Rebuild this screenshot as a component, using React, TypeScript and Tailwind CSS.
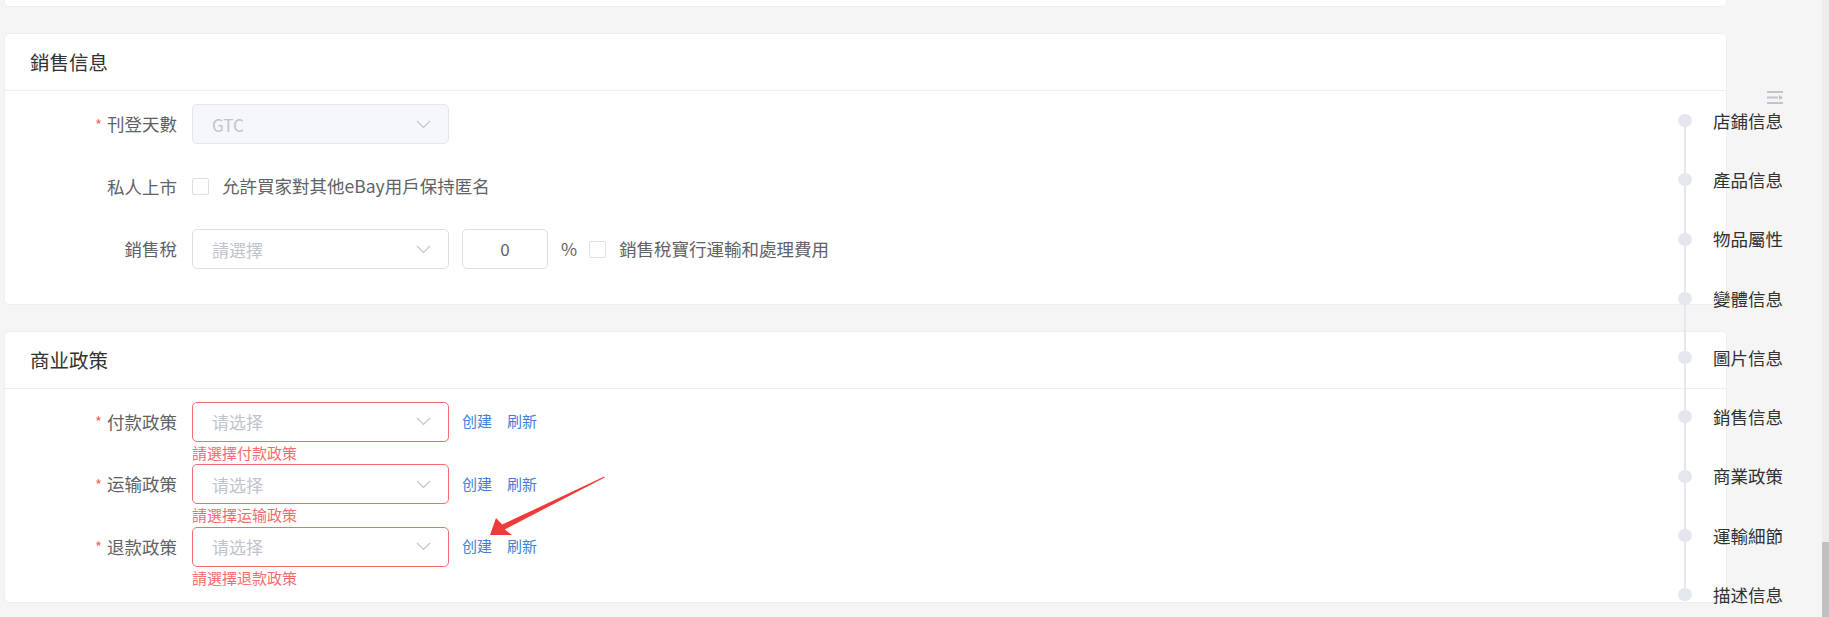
import React from 'react';

const font = { fontFamily: '"Noto Sans CJK SC", "Noto Sans CJK TC", "Liberation Sans", sans-serif' };

function Chevron() {
  return (
    <svg width="15" height="9" viewBox="0 0 15 9" fill="none">
      <path d="M1 1l6.5 6.5L14 1" stroke="#c0c4cc" strokeWidth="1.2" />
    </svg>
  );
}

function Select({
  value,
  placeholder,
  disabled,
  error,
}: {
  value?: string;
  placeholder?: string;
  disabled?: boolean;
  error?: boolean;
}) {
  return (
    <div
      className={
        'w-[257px] h-[40px] rounded-[5px] border px-[19px] pr-[17px] flex items-center justify-between text-[17px] ' +
        (disabled
          ? 'bg-[#f5f7fa] border-[#e4e7ed]'
          : error
            ? 'bg-white border-[#f56c6c]'
            : 'bg-white border-[#dcdfe6]')
      }
    >
      <span className="text-[#c0c4cc] leading-none">{value ?? placeholder}</span>
      <Chevron />
    </div>
  );
}

function Checkbox() {
  return <span className="w-[17px] h-[17px] border border-[#dcdfe6] rounded-[2px] bg-white shrink-0" />;
}

function Label({ text, required }: { text: string; required?: boolean }) {
  return (
    <div className="w-[187px] shrink-0 pr-[15px] flex justify-end items-center text-[17.5px] text-[#606266] leading-none">
      {required && <span className="text-[#f56c6c] mr-[5px] text-[15px]">*</span>}
      {text}
    </div>
  );
}

function Card({ title, children }: { title: string; children: React.ReactNode }) {
  return (
    <div className="bg-white border border-[#ebeef5] rounded-[5px]">
      <div className="h-[57px] px-[25px] flex items-center border-b border-[#ebeef5] text-[19.5px] text-[#303133]">
        {title}
      </div>
      <div className="pt-[13px] pb-[12px]">{children}</div>
    </div>
  );
}

function PolicyRow({ label, error }: { label: string; error: string }) {
  return (
    <div className="flex h-[40px] mb-[22.5px] last:mb-[0px]">
      <Label text={label} required />
      <div className="relative">
        <Select placeholder="请选择" error />
        <div className="absolute left-0 top-full mt-[3px] text-[15px] leading-[15px] text-[#f56c6c] whitespace-nowrap">
          {error}
        </div>
      </div>
      <div className="flex items-center gap-[15px] ml-[13px] text-[15px] text-[#3f82d9]">
        <span>创建</span>
        <span>刷新</span>
      </div>
    </div>
  );
}

const navItems = ['店鋪信息', '產品信息', '物品屬性', '變體信息', '圖片信息', '銷售信息', '商業政策', '運輸細節', '描述信息'];

export default function App() {
  return (
    <div className="relative h-[617px] w-[1829px] overflow-hidden bg-[#f5f5f5]" style={font}>
      <div className="pl-[4px] w-[1727px]">
        {/* previous card bottom */}
        <div className="h-[7px] bg-white border border-t-0 border-[#ebeef5] rounded-b-[5px]" />

        <div className="mt-[26px]">
          <Card title="銷售信息">
            <div className="flex h-[40px] mb-[22.5px]">
              <Label text="刊登天數" required />
              <Select value="GTC" disabled />
            </div>
            <div className="flex h-[40px] mb-[22.5px]">
              <Label text="私人上市" />
              <div className="flex items-center gap-[13px]">
                <Checkbox />
                <span className="text-[17.5px] text-[#606266]">允許買家對其他eBay用戶保持匿名</span>
              </div>
            </div>
            <div className="flex h-[40px] mb-[22.5px]">
              <Label text="銷售稅" />
              <Select placeholder="請選擇" />
              <div className="ml-[13px] w-[86px] h-[40px] rounded-[5px] border border-[#dcdfe6] flex items-center justify-center text-[17px] text-[#606266]">
                0
              </div>
              <span className="ml-[13px] flex items-center text-[17.5px] text-[#606266]">%</span>
              <div className="ml-[12px] flex items-center gap-[13px]">
                <Checkbox />
                <span className="text-[17.5px] text-[#606266]">銷售稅寶行運輸和處理費用</span>
              </div>
            </div>
          </Card>
        </div>

        <div className="mt-[26px]">
          <Card title="商业政策">
            <div className="pb-[23px]">
              <PolicyRow label="付款政策" error="請選擇付款政策" />
              <PolicyRow label="运输政策" error="請選擇运输政策" />
              <PolicyRow label="退款政策" error="請選擇退款政策" />
            </div>
          </Card>
        </div>
      </div>

      {/* anchor nav */}
      <div className="absolute left-[1767px] top-[91px]">
        <svg width="16" height="13" viewBox="0 0 16 13" fill="#c0c4cc">
          <rect x="0" y="0" width="16" height="2" />
          <rect x="0" y="5.5" width="11" height="2" />
          <path d="M12 4l4 2.5-4 2.5z" />
          <rect x="0" y="11" width="16" height="2" />
        </svg>
      </div>
      <div className="absolute left-[1678px] top-[91px]">
        <div className="relative">
          <div className="absolute left-[5.5px] top-[29px] h-[474px] w-[2.5px] bg-[#e4e7ed]" />
          {navItems.map((n) => (
            <div key={n} className="relative h-[59.25px] flex items-center">
              <span className="w-[14px] h-[13px] rounded-full bg-[#e4e7ed]" />
              <span className="ml-[21px] text-[17.5px] text-[#303133] leading-none">{n}</span>
            </div>
          ))}
        </div>
      </div>

      {/* scrollbar */}
      <div className="absolute right-0 top-0 h-full w-[7px] bg-[#ededed]">
        <div className="absolute left-0 right-0 top-[542px] bottom-0 bg-[#c1c1c1]" />
      </div>

      {/* annotation arrow */}
      <svg className="absolute left-0 top-0 pointer-events-none" width="1829" height="617">
        <polygon
          points="490,535 496,518 502.2,524.6 604.3,476.6 604.7,477.4 504.8,529.4 512,535"
          fill="#f03a3a"
        />
      </svg>
    </div>
  );
}
